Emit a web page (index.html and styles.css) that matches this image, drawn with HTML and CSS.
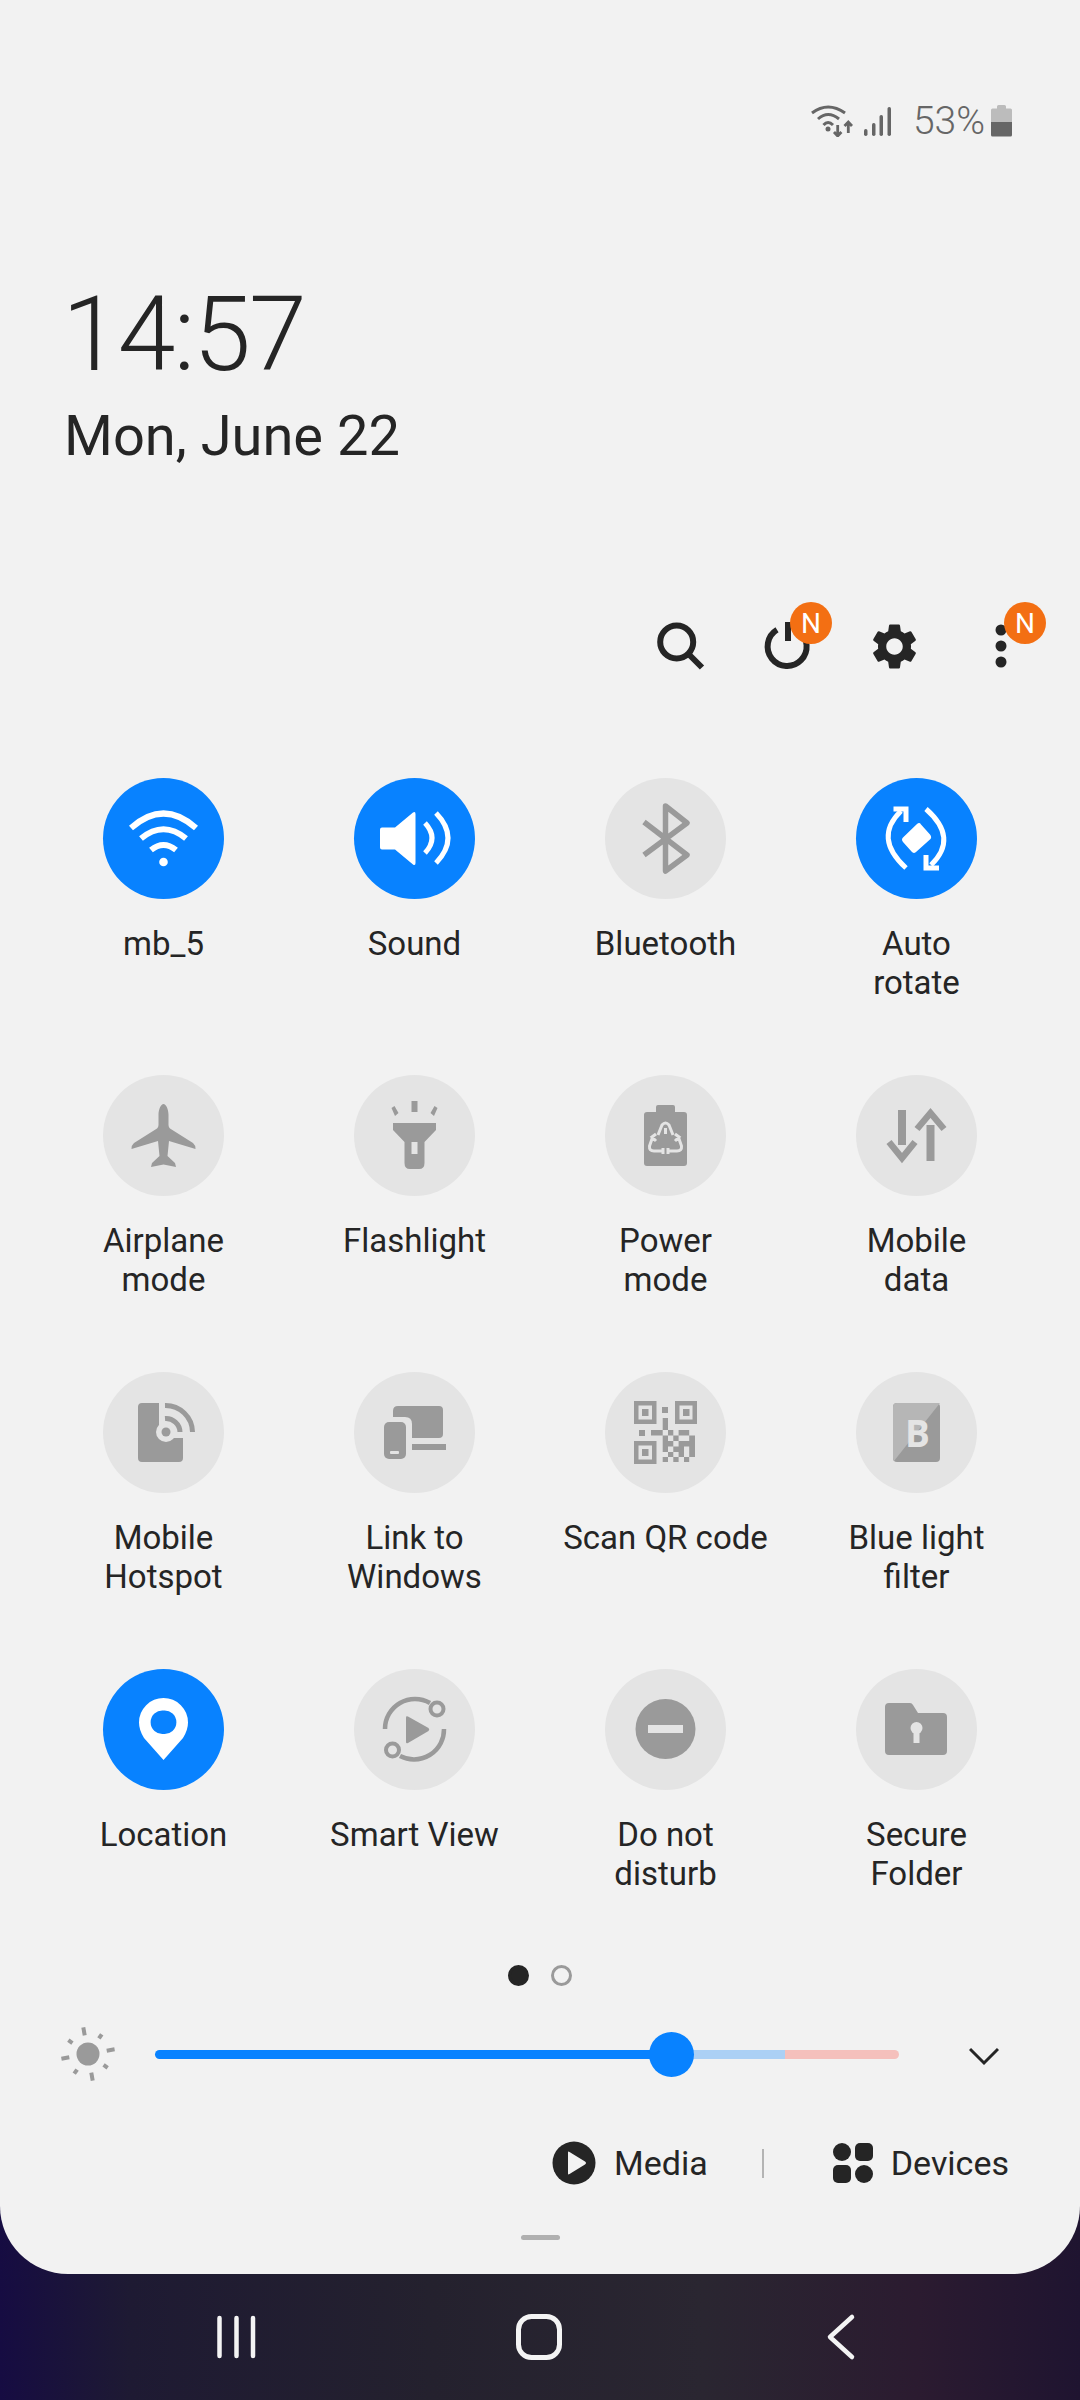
FILE: index.html
```html
<!doctype html>
<html lang="en">
<head>
    <meta charset="UTF-8">
    <meta name="viewport" content="width=device-width, initial-scale=1.0">
    <title>Quick panel</title>
    <link rel="stylesheet" href="styles.css">
</head>
<body>
<div class="panel">
    <div class="statusBar">
        <svg class="statusWifi" width="42" height="32" viewBox="0 0 42 32">
            <path d="M1 8Q17-4 34 8M7 14Q17 5 28 14M12.5 20Q17 15 22 20" fill="none" stroke="#666" stroke-width="3"/>
            <circle cx="17" cy="24" r="2.5" fill="#666"/>
            <path d="M26.7 20v10M23 27l3.7 4 3.700-4M37.300 28V18M33.500 21l3.800-4 3.700 4" fill="none" stroke="#666" stroke-width="2.800"/>
        </svg>
        <svg class="statusSignal" width="27" height="30" viewBox="0 0 27 30">
            <rect x="0" y="23" width="3.500" height="7" rx="1.700" fill="#666"/>
            <rect x="8" y="17" width="3.500" height="13" rx="1.700" fill="#666"/>
            <rect x="15.500" y="9" width="3.500" height="21" rx="1.700" fill="#666"/>
            <rect x="23.500" y="1" width="3.500" height="29" rx="1.700" fill="#666"/>
        </svg>
        <span class="statusLevel">53%</span>
        <svg class="statusBattery" width="21" height="32" viewBox="0 0 21 32">
            <path d="M6 3.500V1.500Q6 0 7.500 0h6Q15 0 15 1.500V3.500h4.500Q21 3.500 21 5v12H0V5q0-1.500 1.500-1.500z" fill="#bcbcbc"/>
            <path d="M0 17h21v13q0 1.500-1.500 1.500h-18Q0 31.500 0 30z" fill="#666"/>
        </svg>
    </div>

    <div class="clock">
        <div class="clockTime">14:57</div>
        <div class="clockDate">Mon, June 22</div>
    </div>

    <div class="actions">
        <div class="action">
            <svg width="60" height="60" viewBox="0 0 60 60" fill="none" stroke="#252525" stroke-width="6">
                <circle cx="26.700" cy="26" r="16.500"/>
                <path d="M38.500 38l13.500 13.500"/>
            </svg>
        </div>
        <div class="action">
            <svg width="60" height="60" viewBox="0 0 60 60" fill="none" stroke="#252525" stroke-width="6">
                <path d="M20 13.800A19.500 19.500 0 1 0 42 15"/>
                <path d="M31 6v19"/>
            </svg>
            <span class="badge">N</span>
        </div>
        <div class="action">
            <svg width="55" height="55" viewBox="0 0 24 24" fill="#252525">
                <path d="M19.140 12.940c.04-.3.06-.61.06-.94 0-.32-.02-.64-.07-.94l2.030-1.580c.18-.14.23-.41.12-.61l-1.920-3.320c-.12-.22-.37-.29-.59-.22l-2.390.96c-.5-.38-1.030-.7-1.620-.94l-.36-2.540c-.04-.24-.24-.41-.48-.41h-3.840c-.24 0-.43.17-.47.41l-.36 2.540c-.59.24-1.130.57-1.620.94l-2.390-.96c-.22-.08-.47 0-.59.22L2.740 8.870c-.12.21-.08.47.12.61l2.030 1.580c-.05.3-.09.63-.09.94s.02.64.07.94l-2.030 1.580c-.18.14-.23.41-.12.61l1.920 3.320c.12.22.37.29.59.22l2.390-.96c.5.38 1.030.7 1.620.94l.36 2.540c.05.24.24.41.48.41h3.840c.24 0 .44-.17.47-.41l.36-2.540c.59-.24 1.130-.56 1.620-.94l2.390.96c.22.08.47 0 .59-.22l1.920-3.320c.12-.22.07-.47-.12-.61l-2.010-1.580zM12 15.600c-1.980 0-3.600-1.620-3.600-3.600s1.620-3.600 3.600-3.600 3.600 1.620 3.600 3.600-1.620 3.600-3.600 3.600z"/>
            </svg>
        </div>
        <div class="action">
            <svg width="60" height="60" viewBox="0 0 60 60" fill="#252525">
                <circle cx="30" cy="14" r="5.500"/>
                <circle cx="30" cy="30" r="5.500"/>
                <circle cx="30" cy="46" r="5.500"/>
            </svg>
            <span class="badge">N</span>
        </div>
    </div>

    <div class="tiles">
        <div class="tile on">
            <div class="tileCircle">
                <svg viewBox="0 0 121 121">
                    <path class="line" d="M28 50Q60.500 21 93 50M38 60.500Q60.500 42 83 60.500M48 72Q60.500 62 73 72" stroke-width="6"/>
                    <circle cx="60.500" cy="84" r="4.300"/>
                </svg>
            </div>
            <div class="tileLabel">mb_5</div>
        </div>
        <div class="tile on">
            <div class="tileCircle">
                <svg viewBox="0 0 121 121">
                    <path d="M28 49.500H41L59 34.500Q61.500 33 61.500 36V85Q61.500 88 59 86.500L41 71.500H28Q26 71.500 26 69.500V51.500Q26 49.500 28 49.500z"/>
                    <path class="line" d="M71 45Q85 60 71 75M82 35Q106 60 82 85" stroke-width="5"/>
                </svg>
            </div>
            <div class="tileLabel">Sound</div>
        </div>
        <div class="tile">
            <div class="tileCircle">
                <svg viewBox="0 0 121 121">
                    <path class="line" d="M39 44L82 77L60.500 93V28L82 45L39 77" stroke-width="5.500" stroke-linejoin="round"/>
                </svg>
            </div>
            <div class="tileLabel">Bluetooth</div>
        </div>
        <div class="tile on">
            <div class="tileCircle">
                <svg viewBox="0 0 121 121">
                    <path d="M61 46Q63.500 44 65 46.500L74 56.500Q76 59 74.500 61L60 74Q57.500 76 55.500 73.500L47 64Q45 61.500 47 59.500z"/>
                    <path class="line" d="M45 33Q17 60 50 90M75 87Q103 60 70 31" stroke-width="5"/>
                    <path class="line" d="M37.500 31H50V44M70 77V90H83" stroke-width="5"/>
                </svg>
            </div>
            <div class="tileLabel">Auto<br>rotate</div>
        </div>

        <div class="tile">
            <div class="tileCircle">
                <svg viewBox="0 0 121 121">
                    <path d="M60.500 29C63 29 65.500 34 65.500 40V50Q65.500 52 67 53.500L90 68Q92.500 70 92.500 74L66 66L64.500 81L72 88L73 92L60.500 89.500L48 92L49 88L56.500 81L55 66L28.500 74Q28.500 70 31 68L54 53.500Q55.500 52 55.500 50V40C55.500 34 58 29 60.500 29z"/>
                </svg>
            </div>
            <div class="tileLabel">Airplane<br>mode</div>
        </div>
        <div class="tile">
            <div class="tileCircle">
                <svg viewBox="0 0 121 121">
                    <path fill-rule="evenodd" d="M39 48H82V55L70.500 67V88Q70.500 94 65 94H56Q50.500 94 50.500 88V67L39 55zM57.500 67V79H63.500V67z"/>
                    <path d="M57.500 26H63.500V37H57.500zM37.500 33L40.500 31L44.500 38L41 41zM83.500 33L80.500 31L76.500 38L80 41z"/>
                </svg>
            </div>
            <div class="tileLabel">Flashlight</div>
        </div>
        <div class="tile">
            <div class="tileCircle">
                <svg viewBox="0 0 121 121">
                    <path d="M51 32Q51 30 53 30H68Q70 30 70 32V37H79Q82 37 82 40V88Q82 91 79 91H42Q39 91 39 88V40Q39 37 42 37H51z"/>
                    <path class="cut" d="M53 60L57 50Q60.500 46 64 50L68 60M60.500 53V59M48 61L44.500 71Q44 76 49 76H58M51 59L47 62L51 66M73 61L76.500 71Q77 76 72 76H63M70 59L74 62L70 66M58 73V79M63 73V79" stroke-width="3"/>
                </svg>
            </div>
            <div class="tileLabel">Power<br>mode</div>
        </div>
        <div class="tile">
            <div class="tileCircle">
                <svg viewBox="0 0 121 121">
                    <path d="M42 35H50V70H42zM70.500 50H78.500V86H70.500z"/>
                    <path class="line" d="M33 67L46 83L59 67M61 54L74.500 38L88 54" stroke-width="6.500"/>
                </svg>
            </div>
            <div class="tileLabel">Mobile<br>data</div>
        </div>

        <div class="tile">
            <div class="tileCircle">
                <svg viewBox="0 0 121 121">
                    <path d="M39 31H56V66H80V86Q80 90 76 90H39Q35 90 35 86V35Q35 31 39 31z"/>
                    <circle class="cutFill" cx="63" cy="60" r="10"/>
                    <circle cx="63" cy="60" r="4.500"/>
                    <path class="line" d="M62 46.500A14 14 0 0 1 77 60M62 33.500A27 27 0 0 1 89.500 60" stroke-width="5"/>
                </svg>
            </div>
            <div class="tileLabel">Mobile<br>Hotspot</div>
        </div>
        <div class="tile">
            <div class="tileCircle">
                <svg viewBox="0 0 121 121">
                    <path d="M44 34H85Q89 34 89 38V62Q89 66 85 66H58V52Q58 45 51 45H39V39Q39 34 44 34z"/>
                    <path d="M58 72H92V78H58z"/>
                    <rect x="30" y="50" width="22" height="37" rx="5"/>
                    <rect class="cutFill" x="36" y="79" width="9" height="3" rx="1"/>
                </svg>
            </div>
            <div class="tileLabel">Link to<br>Windows</div>
        </div>
        <div class="tile">
            <div class="tileCircle">
                <svg viewBox="0 0 121 121">
                    <path fill-rule="evenodd" d="M29 29H51.500V52H29zM33.500 33.500V47.500H47V33.500zM37 37H43.500V44H37zM70 29H92V52H70zM74.500 33.500V47.500H87.500V33.500zM78 37H84.500V44H78zM29 69H51.500V92H29zM33.500 73.500V87.500H47V73.500zM37 77H43.500V84H37z"/>
                    <path d="M57 35H63V41H57zM57.700 46H63V58H57.700zM34 58H40V64H34zM46 58H57.700V63.500H46zM63 58H68.300V63.500H63zM73.600 58H84.200V63.500H73.600zM57.700 63.500H63V69H57.700zM68.300 63.500H73.600V69H68.300zM84.200 63.500H90V69H84.200zM57.700 69H68.300V74.500H57.700zM73.600 69H90V74.500H73.600zM57.700 74.500H63V80H57.700zM68.300 74.500H79V80H68.300zM84.200 74.500H90V80H84.200zM63 80H68.300V85H63zM73.600 80H79V85H73.600zM84.200 80H90V85H84.200zM57.700 85H63V90H57.700zM68.300 85H73.600V90H68.300zM79 85H84.200V90H79z"/>
                </svg>
            </div>
            <div class="tileLabel">Scan QR code</div>
        </div>
        <div class="tile">
            <div class="tileCircle">
                <svg viewBox="0 0 121 121">
                    <rect x="37" y="31" width="47" height="59" rx="4"/>
                    <path class="lighter" d="M41 31H84L38 89Q37 88 37 86V35Q37 31 41 31z"/>
                    <text class="blueB" x="61.500" y="75" text-anchor="middle">B</text>
                </svg>
            </div>
            <div class="tileLabel">Blue light<br>filter</div>
        </div>

        <div class="tile on">
            <div class="tileCircle">
                <svg viewBox="0 0 121 121">
                    <path fill-rule="evenodd" d="M60.500 29A24.500 24.500 0 0 1 85 53.500Q85 61 80 69L60.500 91L41 69Q36 61 36 53.500A24.500 24.500 0 0 1 60.500 29zM60.500 41.500A11.800 11.800 0 1 0 60.500 65A11.800 11.800 0 1 0 60.500 41.500z"/>
                </svg>
            </div>
            <div class="tileLabel">Location</div>
        </div>
        <div class="tile">
            <div class="tileCircle">
                <svg viewBox="0 0 121 121">
                    <path d="M54 47.500L74.500 59Q76 60.500 74.500 62L54 74Q52 75 52 73V48.500Q52 46.500 54 47.500z"/>
                    <path class="line" d="M31 60A30 30 0 0 1 76 34M90 60A30 30 0 0 1 46 87" stroke-width="4.500"/>
                    <circle class="line" cx="83" cy="40" r="6.500" stroke-width="4"/>
                    <circle class="line" cx="38.500" cy="81" r="6.500" stroke-width="4"/>
                </svg>
            </div>
            <div class="tileLabel">Smart View</div>
        </div>
        <div class="tile">
            <div class="tileCircle">
                <svg viewBox="0 0 121 121">
                    <circle cx="60.500" cy="60" r="30"/>
                    <rect class="cutFill" x="43" y="56" width="35" height="8"/>
                </svg>
            </div>
            <div class="tileLabel">Do not<br>disturb</div>
        </div>
        <div class="tile">
            <div class="tileCircle">
                <svg viewBox="0 0 121 121">
                    <path d="M33 34H54Q56 34 57 36L62 44H87Q91 44 91 48V82Q91 86 87 86H33Q29 86 29 82V38Q29 34 33 34z"/>
                    <circle class="cutFill" cx="60.500" cy="59" r="6"/>
                    <rect class="cutFill" x="57.500" y="60" width="6" height="14"/>
                </svg>
            </div>
            <div class="tileLabel">Secure<br>Folder</div>
        </div>
    </div>

    <div class="pageDots">
        <span class="pageDot current"></span>
        <span class="pageDot"></span>
    </div>

    <div class="brightness">
        <svg class="sun" width="56" height="60" viewBox="0 0 56 60" fill="#9a9a9a">
            <circle cx="28" cy="30" r="11.500"/>
            <rect x="26" y="3" width="4" height="8" transform="rotate(-10 28 30)"/>
            <rect x="26" y="6" width="4" height="5" transform="rotate(35 28 30)"/>
            <rect x="26" y="3" width="4" height="8" transform="rotate(80 28 30)"/>
            <rect x="26" y="6" width="4" height="5" transform="rotate(125 28 30)"/>
            <rect x="26" y="3" width="4" height="8" transform="rotate(170 28 30)"/>
            <rect x="26" y="6" width="4" height="5" transform="rotate(215 28 30)"/>
            <rect x="26" y="3" width="4" height="8" transform="rotate(260 28 30)"/>
            <rect x="26" y="6" width="4" height="5" transform="rotate(305 28 30)"/>
        </svg>
        <div class="slider">
            <span class="sliderFill"></span>
            <span class="sliderRest"></span>
            <span class="sliderHot"></span>
            <span class="sliderKnob"></span>
        </div>
        <svg class="chevron" width="30" height="20" viewBox="0 0 30 20" fill="none" stroke="#252525" stroke-width="3">
            <path d="M1 3L15 17L29 3"/>
        </svg>
    </div>

    <div class="mediaRow">
        <svg width="44" height="44" viewBox="0 0 44 44">
            <circle cx="22" cy="22" r="21.500" fill="#252525"/>
            <path d="M16 11.500Q16 10 17.500 11L33 20.500Q35 22 33 23.500L17.500 33Q16 34 16 32.500z" fill="#f2f2f2"/>
        </svg>
        <span class="mediaText">Media</span>
        <span class="mediaSep"></span>
        <svg width="40" height="40" viewBox="0 0 40 40" fill="#252525">
            <circle cx="9" cy="9" r="9"/>
            <rect x="22" y="0" width="18" height="18" rx="5"/>
            <rect x="0" y="22" width="18" height="18" rx="5"/>
            <circle cx="31" cy="31" r="9"/>
        </svg>
        <span class="mediaText">Devices</span>
    </div>

    <div class="handle"></div>
</div>

<div class="navBar">
    <svg width="60" height="60" viewBox="0 0 60 60" fill="none" stroke="#f4f4f4" stroke-width="4.500" stroke-linecap="round">
        <path d="M12.500 11V49M29.500 11V49M46 11V49"/>
    </svg>
    <svg width="60" height="60" viewBox="0 0 60 60" fill="none" stroke="#f4f4f4" stroke-width="5">
        <rect x="9.500" y="9.500" width="41" height="41" rx="13"/>
    </svg>
    <svg width="60" height="60" viewBox="0 0 60 60" fill="none" stroke="#f4f4f4" stroke-width="4.500" stroke-linecap="round" stroke-linejoin="round">
        <path d="M41 10L19 30L41 50"/>
    </svg>
</div>
</body>
</html>
```

FILE: styles.css
```css
* {
    box-sizing: border-box;
}

body {
    margin: 0;
    width: 1080px;
    height: 2400px;
    overflow: hidden;
    font-family: Roboto, "Liberation Sans", sans-serif;
    color: #252525;
    background: linear-gradient(90deg, #160c42 0, #1e1a33 12%, #24212e 40%, #2a2631 65%, #2b1b30 85%, #1f1430 100%);
}

.panel {
    height: 2274px;
    padding-top: 100px;
    background: #f2f2f2;
    border-radius: 0 0 68px 68px;
    overflow: hidden;
}

.statusBar {
    display: flex;
    justify-content: flex-end;
    align-items: center;
    height: 42px;
    padding-right: 68px;
    color: #666;
}

.statusWifi {
    margin-right: 11px;
}

.statusSignal {
    margin-right: 22px;
}

.statusLevel {
    font-size: 39px;
    font-weight: 300;
    margin-right: 6px;
}

.clock {
    padding: 133px 0 0 64px;
}

.clockTime {
    font-size: 104px;
    font-weight: 300;
    line-height: 120px;
    letter-spacing: -2px;
    margin-left: -2px;
}

.clockDate {
    font-size: 56px;
    line-height: 70px;
    margin-top: 6px;
}

.actions {
    display: flex;
    justify-content: flex-end;
    height: 80px;
    margin-top: 135px;
    padding-right: 25.5px;
}

.action {
    position: relative;
    display: flex;
    justify-content: center;
    align-items: center;
    width: 107px;
}

.badge {
    position: absolute;
    left: 56.5px;
    top: -4px;
    display: flex;
    justify-content: center;
    align-items: center;
    width: 42px;
    height: 42px;
    border-radius: 50%;
    background: #f36f13;
    color: #fff;
    font-size: 28px;
}

.tiles {
    display: grid;
    grid-template-columns: repeat(4, 251px);
    grid-template-rows: 297px 297px 297px 296px;
    margin-top: 92px;
    padding-left: 38px;
}

.tile {
    display: flex;
    flex-direction: column;
    align-items: center;
}

.tileCircle {
    width: 121px;
    height: 121px;
    border-radius: 50%;
    background: #e4e4e4;
    fill: #9a9a9a;
    stroke: #9a9a9a;
    stroke-width: 0;
}

.tileCircle svg {
    display: block;
    width: 121px;
    height: 121px;
}

.tile.on .tileCircle {
    background: #0882ff;
    fill: #fff;
    stroke: #fff;
}

.tileCircle .line {
    fill: none;
}

.tileCircle .cut {
    fill: none;
    stroke: #e4e4e4;
}

.tileCircle .cutFill {
    fill: #e4e4e4;
}

.tileCircle .lighter {
    fill: #b6b6b6;
}

.blueB {
    font-family: "Open Sans", sans-serif;
    font-weight: 700;
    font-size: 37px;
    fill: #e4e4e4;
}

.tileLabel {
    margin-top: 25px;
    font-size: 33px;
    line-height: 39px;
    text-align: center;
    white-space: nowrap;
}

.pageDots {
    display: flex;
    justify-content: center;
    gap: 22px;
    padding-right: 1px;
}

.pageDot {
    width: 21px;
    height: 21px;
    border-radius: 50%;
    border: 3.5px solid #9a9a9a;
}

.pageDot.current {
    background: #252525;
    border-color: #252525;
}

.brightness {
    display: flex;
    align-items: center;
    height: 60px;
    margin-top: 38px;
    padding-left: 60px;
}

.slider {
    position: relative;
    display: flex;
    width: 744px;
    height: 9px;
    margin-left: 39px;
    border-radius: 5px;
}

.sliderFill {
    width: 516px;
    background: #0882ff;
    border-radius: 5px 0 0 5px;
}

.sliderRest {
    width: 114px;
    background: #abd0f5;
}

.sliderHot {
    width: 114px;
    background: #f5c0bc;
    border-radius: 0 5px 5px 0;
}

.sliderKnob {
    position: absolute;
    left: 494px;
    top: -18px;
    width: 45px;
    height: 45px;
    border-radius: 50%;
    background: #0882ff;
}

.chevron {
    margin: 4px 0 0 70px;
}

.mediaRow {
    display: flex;
    justify-content: flex-end;
    align-items: center;
    height: 50px;
    margin-top: 54px;
    padding-right: 71px;
}

.mediaText {
    font-size: 34px;
    margin-left: 18px;
}

.mediaSep {
    width: 2px;
    height: 29px;
    margin: 0 68.5px 0 54.5px;
    background: #b4b4b4;
}

.handle {
    width: 39px;
    height: 5px;
    margin: 47px auto 0;
    border-radius: 3px;
    background: #b0b0b0;
}

.navBar {
    display: flex;
    justify-content: center;
    align-items: center;
    gap: 242px;
    height: 126px;
    padding-right: 3px;
}
```
